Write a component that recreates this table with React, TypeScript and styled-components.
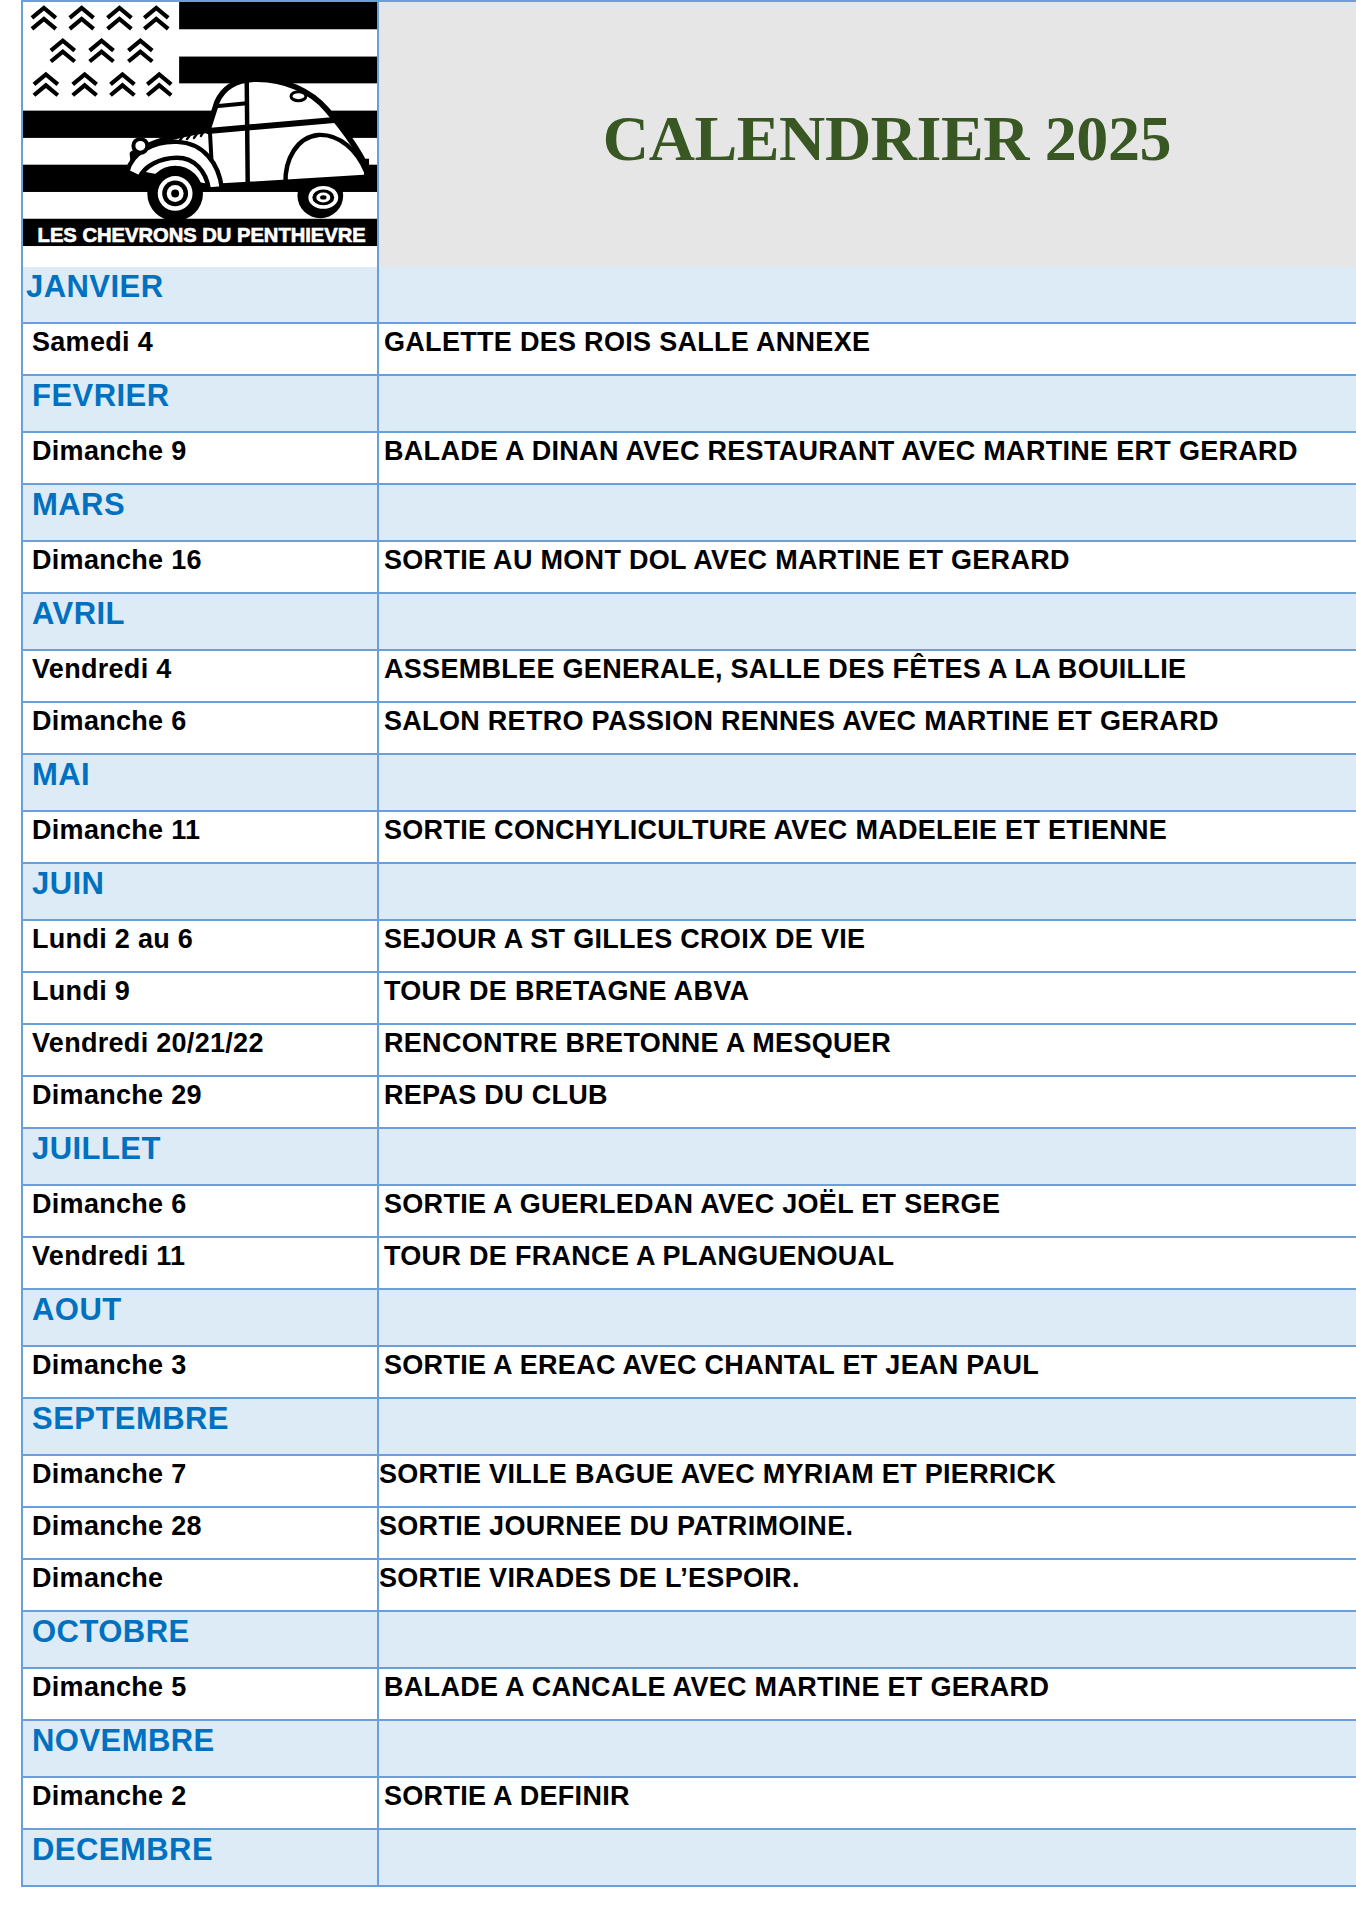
import React from "react";
import styled, { createGlobalStyle } from "styled-components";

const LINE = "#6b9fd9";

const GlobalStyle = createGlobalStyle`
	html, body {
		margin: 0;
		padding: 0;
		background: #fff;
		overflow-x: hidden;
	}
	body {
		font-family: "Liberation Sans", Arial, sans-serif;
	}
`;

const Sheet = styled.div`
	width: 1372px;
	margin-left: 21px;
	border-top: 2px solid ${LINE};
	border-left: 2px solid ${LINE};
`;

const Row = styled.div<{ $kind: "header" | "month" | "event" }>`
	display: grid;
	grid-template-columns: 356px 1fr;
	box-sizing: border-box;
	height: ${(p) => (p.$kind === "header" ? 265 : p.$kind === "month" ? 57 : 52)}px;
	border-bottom: ${(p) => (p.$kind === "header" ? "none" : `2px solid ${LINE}`)};
	background: ${(p) => (p.$kind === "month" ? "#ddebf7" : "#fff")};
`;

const LogoCell = styled.div`
	border-right: 2px solid ${LINE};
	background: #fff;
	overflow: hidden;
`;

const TitleCell = styled.div`
	background: #e7e6e6;
	display: flex;
	justify-content: center;
	align-items: flex-start;
	padding-top: 105px;
	box-sizing: border-box;
`;

const Title = styled.h1`
	margin: 0;
	font-family: "Liberation Serif", "Times New Roman", serif;
	font-weight: 700;
	font-size: 64px;
	line-height: 1;
	letter-spacing: -0.4px;
	color: #385723;
	white-space: nowrap;
`;

const DayCell = styled.div<{ $inset: number }>`
	border-right: 2px solid ${LINE};
	padding: 3px 0 0 ${(p) => p.$inset}px;
	box-sizing: border-box;
`;

const InfoCell = styled.div<{ $inset: number }>`
	padding: 3px 0 0 ${(p) => p.$inset}px;
	box-sizing: border-box;
`;

const MonthName = styled.span`
	display: block;
	margin-top: -1px;
	font-size: 31px;
	font-weight: 700;
	letter-spacing: 0.45px;
	color: #0070c0;
	white-space: nowrap;
`;

const EventText = styled.span`
	display: block;
	font-size: 27px;
	font-weight: 700;
	letter-spacing: 0.3px;
	color: #000;
	white-space: nowrap;
`;

type Month = {
	name: string;
	inset?: number;
	tight?: boolean;
	events: [string, string][];
};

const MONTHS: Month[] = [
	{ name: "JANVIER", inset: 3, events: [["Samedi 4", "GALETTE DES ROIS SALLE ANNEXE"]] },
	{
		name: "FEVRIER",
		events: [["Dimanche 9", "BALADE A DINAN AVEC RESTAURANT AVEC MARTINE ERT GERARD"]],
	},
	{ name: "MARS", events: [["Dimanche 16", "SORTIE AU MONT DOL AVEC MARTINE ET GERARD"]] },
	{
		name: "AVRIL",
		events: [
			["Vendredi 4", "ASSEMBLEE GENERALE, SALLE DES FÊTES A LA BOUILLIE"],
			["Dimanche 6", "SALON RETRO PASSION RENNES AVEC MARTINE ET GERARD"],
		],
	},
	{ name: "MAI", events: [["Dimanche 11", "SORTIE CONCHYLICULTURE AVEC MADELEIE ET ETIENNE"]] },
	{
		name: "JUIN",
		events: [
			["Lundi 2 au 6", "SEJOUR A ST GILLES CROIX DE VIE"],
			["Lundi 9", "TOUR DE BRETAGNE ABVA"],
			["Vendredi 20/21/22", "RENCONTRE BRETONNE A MESQUER"],
			["Dimanche 29", "REPAS DU CLUB"],
		],
	},
	{
		name: "JUILLET",
		events: [
			["Dimanche 6", "SORTIE A GUERLEDAN AVEC JOËL ET SERGE"],
			["Vendredi 11", "TOUR DE FRANCE A PLANGUENOUAL"],
		],
	},
	{ name: "AOUT", events: [["Dimanche 3", "SORTIE A EREAC AVEC CHANTAL ET JEAN PAUL"]] },
	{
		name: "SEPTEMBRE",
		tight: true,
		events: [
			["Dimanche 7", "SORTIE VILLE BAGUE AVEC MYRIAM ET PIERRICK"],
			["Dimanche 28", "SORTIE JOURNEE DU PATRIMOINE."],
			["Dimanche", "SORTIE VIRADES DE L’ESPOIR."],
		],
	},
	{ name: "OCTOBRE", events: [["Dimanche 5", "BALADE A CANCALE AVEC MARTINE ET GERARD"]] },
	{ name: "NOVEMBRE", events: [["Dimanche 2", "SORTIE A DEFINIR"]] },
	{ name: "DECEMBRE", events: [] },
];

const CHEVRONS: [number, number][] = [
	[21, 4], [59, 4], [97, 4], [134, 4],
	[40, 37], [79, 37], [118, 37],
	[23, 71], [62, 71], [100, 71], [137, 71],
];

const Logo = () => (
	<svg width="354" height="248" viewBox="0 0 356 250" preserveAspectRatio="none">
		<rect x="0" y="0" width="356" height="250" fill="#fff" />
		{/* gwenn-ha-du stripes */}
		<rect x="157" y="0" width="199" height="27.5" fill="#000" />
		<rect x="157" y="55" width="199" height="27" fill="#000" />
		<rect x="0" y="109.5" width="356" height="27.5" fill="#000" />
		<rect x="0" y="164" width="356" height="27.5" fill="#000" />
		<rect x="0" y="218.5" width="356" height="27.5" fill="#000" />

		{/* double chevrons */}
		<g fill="none" stroke="#000" strokeWidth="4.2" strokeLinejoin="miter">
			{CHEVRONS.map(([cx, ty]) => (
				<g key={`${cx}-${ty}`}>
					<path d={`M${cx - 12} ${ty + 12} L${cx} ${ty + 2} L${cx + 12} ${ty + 12}`} />
					<path d={`M${cx - 12} ${ty + 23} L${cx} ${ty + 13} L${cx + 12} ${ty + 23}`} />
				</g>
			))}
		</g>

		{/* 2CV */}
		<g stroke="#000" strokeLinecap="round" strokeLinejoin="round">
			{/* rear wheel */}
			<circle cx="299" cy="195" r="23" fill="#000" stroke="none" />
			<ellipse cx="302" cy="197" rx="15" ry="11.5" fill="#fff" stroke="none" />
			<ellipse cx="302" cy="197" rx="11" ry="8" fill="#000" stroke="none" />
			<ellipse cx="302" cy="197" rx="7" ry="5" fill="#fff" stroke="none" />
			<ellipse cx="302" cy="197" rx="3.2" ry="2.2" fill="#000" stroke="none" />

			{/* body */}
			<path
				d="M110 153 C128 141 160 133 186 129 L195 101 C201 87 213 79 232 78 C263 77 290 90 306 109 C323 129 338 150 346 168 L348 178 L196 188 L112 172 Z"
				fill="#fff"
				strokeWidth="5.5"
			/>
			<path d="M264 183 C263 158 276 136 297 134 C319 133 336 150 345 171" fill="none" strokeWidth="4.5" />
			<path d="M186 130 L313 119" fill="none" strokeWidth="6" />
			<path d="M194 105 L225 102" fill="none" strokeWidth="4" />
			<path d="M225 80 L226 184" fill="none" strokeWidth="4.5" />
			<path d="M188 131 L191 186" fill="none" strokeWidth="4" />
			<ellipse cx="277" cy="95" rx="7.5" ry="4.5" fill="none" strokeWidth="3" />
			<path d="M196 186 L347 177" fill="none" strokeWidth="6" />
			<path d="M158 139 L164 131 M165 138 L171 130 M172 137 L177 130 M179 135 L182 130" fill="none" strokeWidth="2.5" />

			{/* front wing */}
			<path
				d="M105 171 C109 152 132 140 155 141 C181 142 197 162 200 188 L187 189 C184 170 172 157 155 157 C137 157 122 166 117 177 Z"
				fill="#fff"
				strokeWidth="4.5"
			/>

			{/* front wheel */}
			<circle cx="153" cy="193" r="28" fill="#000" stroke="none" />
			<circle cx="153" cy="193" r="17.5" fill="#fff" stroke="none" />
			<circle cx="153" cy="193" r="13" fill="#000" stroke="none" />
			<circle cx="153" cy="193" r="8.5" fill="#fff" stroke="none" />
			<circle cx="153" cy="193" r="4" fill="#000" stroke="none" />

			{/* lamp and bumpers */}
			<circle cx="118" cy="145" r="7" fill="#fff" strokeWidth="4" />
			<path d="M100 178 L110 176 L112 187 L102 189 Z" fill="#000" stroke="none" />
			<rect x="343" y="158" width="5" height="20" fill="#000" stroke="none" />
		</g>

		<text
			x="14.7"
			y="241.5"
			fill="#fff"
			stroke="#fff"
			strokeWidth="0.7"
			fontFamily="'Liberation Sans', Arial, sans-serif"
			fontWeight="700"
			fontSize="20.5"
			textLength="330"
			lengthAdjust="spacingAndGlyphs"
		>
			LES CHEVRONS DU PENTHIEVRE
		</text>
	</svg>
);

export default function App() {
	return (
		<>
			<GlobalStyle />
			<Sheet>
				<Row $kind="header">
					<LogoCell>
						<Logo />
					</LogoCell>
					<TitleCell>
						<Title>CALENDRIER 2025</Title>
					</TitleCell>
				</Row>

				{MONTHS.map((m) => (
					<React.Fragment key={m.name}>
						<Row $kind="month">
							<DayCell $inset={m.inset ?? 9}>
								<MonthName>{m.name}</MonthName>
							</DayCell>
							<InfoCell $inset={0} />
						</Row>
						{m.events.map(([day, what]) => (
							<Row $kind="event" key={`${m.name}-${day}`}>
								<DayCell $inset={9}>
									<EventText>{day}</EventText>
								</DayCell>
								<InfoCell $inset={m.tight ? 0 : 5}>
									<EventText>{what}</EventText>
								</InfoCell>
							</Row>
						))}
					</React.Fragment>
				))}
			</Sheet>
		</>
	);
}
